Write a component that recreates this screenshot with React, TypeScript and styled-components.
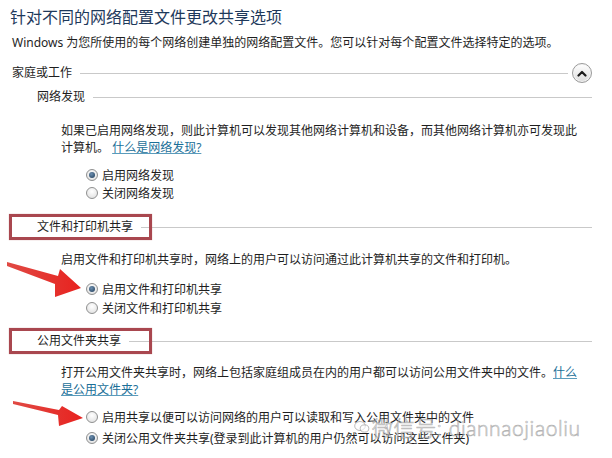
import React from 'react';
import styled, { createGlobalStyle } from 'styled-components';

const GlobalStyle = createGlobalStyle`
  html, body {
    margin: 0;
    padding: 0;
    background: #ffffff;
  }
  body {
    width: 612px;
    height: 458px;
    overflow: hidden;
    font-family: "Noto Sans", "Noto Sans CJK SC", sans-serif;
    color: #1e1e1e;
  }
`

const Page = styled('div')`
    position: relative;
    display: flex;
    flex-direction: column;
    width: 612px;
    height: 458px;
    box-sizing: border-box;
    padding: 7px 20px 0 10px;
    background: #ffffff;
`

const Title = styled('h1')`
    margin: 0;
    font-size: 16px;
    line-height: 20px;
    font-weight: 400;
    color: #1e395b;
    white-space: nowrap;
`

const Intro = styled('p')`
    margin: 8px 0 0 2px;
    font-size: 12px;
    line-height: 16px;
    white-space: nowrap;
`

const GroupHeader = styled('div')`
    display: flex;
    align-items: center;
    height: 20px;
    margin: 12px 0 0 2px;
`

const Label = styled('span')`
    font-size: 12px;
    line-height: 16px;
    white-space: nowrap;
`

const Rule = styled('div')`
    flex: 1;
    height: 1px;
    margin-left: 8px;
    background: #c9c9c9;
`

const CollapseButton = styled('button')`
    display: flex;
    align-items: center;
    justify-content: center;
    width: 20px;
    height: 20px;
    margin-left: 4px;
    padding: 0;
    border: 1px solid #9a9a9a;
    border-radius: 50%;
    background: linear-gradient(#ffffff, #dcdcdc);
    box-shadow: inset 0 0 0 1px #f4f4f4;
`

const SectionHeader = styled('div')<{ $marked?: boolean; $top: number }>`
    position: relative;
    display: flex;
    align-items: center;
    height: 16px;
    margin-top: ${p => p.$top}px;
    padding-left: 27px;

    ${p => p.$marked && `
      &::before {
        content: '';
        position: absolute;
        left: -1px;
        top: -5px;
        width: 143px;
        height: 26px;
        box-sizing: border-box;
        border: 3px solid #a9474f;
        box-shadow: 0 0 1px rgba(169, 71, 79, 0.5);
      }
    `}
`

const Paragraph = styled('p')<{ $top: number }>`
    margin: ${p => p.$top}px 0 0 51px;
    font-size: 12px;
    line-height: 17px;
    white-space: nowrap;
`

const Link = styled('a')`
    color: #1b6f98;
    text-decoration: underline;
    text-decoration-color: #5a9bbb;
`

const RadioList = styled('div')<{ $top: number }>`
    display: flex;
    flex-direction: column;
    margin: ${p => p.$top}px 0 0 76px;
`

const RadioRow = styled('label')<{ $height: number }>`
    display: flex;
    align-items: center;
    gap: 4px;
    height: ${p => p.$height}px;
    font-size: 12px;
    white-space: nowrap;
`

const RadioDot = styled('span')<{ $checked?: boolean }>`
    position: relative;
    width: 12px;
    height: 12px;
    box-sizing: border-box;
    border-radius: 50%;
    border: 1px solid #8f9090;
    background: radial-gradient(circle at 50% 35%, #ffffff, #dcdcdc);

    ${p => p.$checked && `
      &::after {
        content: '';
        position: absolute;
        left: 2px;
        top: 2px;
        width: 6px;
        height: 6px;
        border-radius: 50%;
        background: radial-gradient(circle at 40% 35%, #6c8fb0, #1f3b57);
      }
    `}
`

const Arrows = styled('svg')`
    position: absolute;
    left: 0;
    top: 0;
    pointer-events: none;
`

const Watermark = styled('div')`
    position: absolute;
    left: 354px;
    top: 412px;
    display: flex;
    align-items: center;
    gap: 2px;
    font-family: Lato, "Noto Sans CJK SC", sans-serif;
    font-size: 21px;
    font-weight: 300;
    letter-spacing: 0.6px;
    color: rgba(255, 255, 255, 0.55);
    -webkit-text-stroke: 0.7px rgba(130, 130, 130, 0.6);
    white-space: nowrap;
    pointer-events: none;
`

function ChevronUp() {
  return (
    <svg width="10" height="7" viewBox="0 0 10 7">
      <path d="M1.5 5.5 L5 2 L8.5 5.5" fill="none" stroke="#1c1c1c" strokeWidth="2.2" strokeLinecap="round" strokeLinejoin="round" />
    </svg>
  );
}

function WeChatMark() {
  return (
    <svg width="16" height="14" viewBox="0 0 16 14">
      <ellipse cx="6" cy="6" rx="5.3" ry="4.5" fill="none" stroke="rgba(130,130,130,0.6)" strokeWidth="0.9" />
      <ellipse cx="10.5" cy="8.5" rx="4.3" ry="3.6" fill="rgba(255,255,255,0.6)" stroke="rgba(130,130,130,0.6)" strokeWidth="0.9" />
    </svg>
  );
}

function Radio({ checked, height, children }: { checked?: boolean; height: number; children: React.ReactNode }) {
  return (
    <RadioRow $height={height}>
      <RadioDot $checked={checked} />
      <span>{children}</span>
    </RadioRow>
  );
}

export default function App() {
  return (
    <Page>
      <GlobalStyle />
      <Title>针对不同的网络配置文件更改共享选项</Title>
      <Intro>Windows 为您所使用的每个网络创建单独的网络配置文件。您可以针对每个配置文件选择特定的选项。</Intro>

      <GroupHeader>
        <Label>家庭或工作</Label>
        <Rule />
        <CollapseButton><ChevronUp /></CollapseButton>
      </GroupHeader>

      <SectionHeader $top={6}>
        <Label>网络发现</Label>
        <Rule />
      </SectionHeader>
      <Paragraph $top={17}>
        如果已启用网络发现，则此计算机可以发现其他网络计算机和设备，而其他网络计算机亦可发现此<br />
        计算机。 <Link>什么是网络发现?</Link>
      </Paragraph>
      <RadioList $top={10}>
        <Radio checked height={18}>启用网络发现</Radio>
        <Radio height={18}>关闭网络发现</Radio>
      </RadioList>

      <SectionHeader $top={17} $marked>
        <Label>文件和打印机共享</Label>
        <Rule />
      </SectionHeader>
      <Paragraph $top={16}>
        启用文件和打印机共享时，网络上的用户可以访问通过此计算机共享的文件和打印机。
      </Paragraph>
      <RadioList $top={11}>
        <Radio checked height={19}>启用文件和打印机共享</Radio>
        <Radio height={19}>关闭文件和打印机共享</Radio>
      </RadioList>

      <SectionHeader $top={16} $marked>
        <Label>公用文件夹共享</Label>
        <Rule />
      </SectionHeader>
      <Paragraph $top={15}>
        打开公用文件夹共享时，网络上包括家庭组成员在内的用户都可以访问公用文件夹中的文件。<Link>什么</Link><br />
        <Link>是公用文件夹?</Link>
      </Paragraph>
      <RadioList $top={8}>
        <Radio height={21}>启用共享以便可以访问网络的用户可以读取和写入公用文件夹中的文件</Radio>
        <Radio checked height={21}>关闭公用文件夹共享(登录到此计算机的用户仍然可以访问这些文件夹)</Radio>
      </RadioList>

      <Arrows width="612" height="458" viewBox="0 0 612 458">
        <defs>
          <linearGradient id="arrowRed" x1="0" y1="0" x2="1" y2="0">
            <stop offset="0" stopColor="#e04a44" />
            <stop offset="1" stopColor="#e8221f" />
          </linearGradient>
        </defs>
        <polygon points="7,262 58,276 60,269 81,288 55,297 55,284 7,266" fill="url(#arrowRed)" />
        <polygon points="13,401 59,410 62,406 83,418 59,426 58,415 13,404" fill="url(#arrowRed)" />
      </Arrows>

      <Watermark>
        <WeChatMark />
        <span>微信号: diannaojiaoliu</span>
      </Watermark>
    </Page>
  );
}
